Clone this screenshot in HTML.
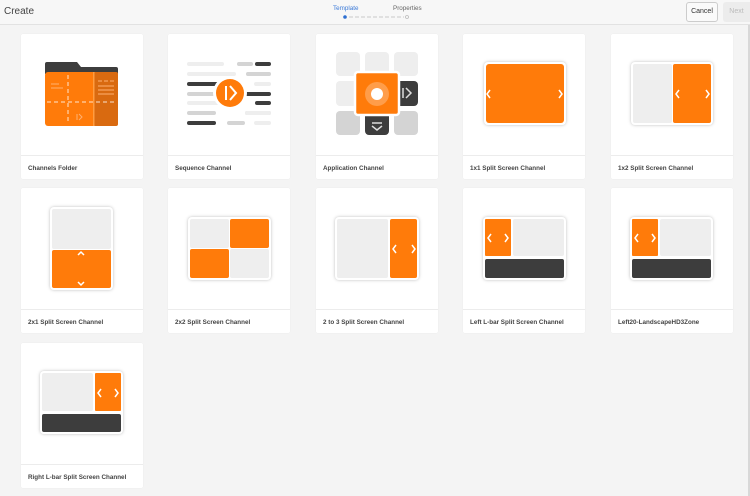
<!DOCTYPE html>
<html><head><meta charset="utf-8">
<style>
*{margin:0;padding:0;box-sizing:border-box}
body{width:750px;height:496px;background:#f4f4f4;font-family:"Liberation Sans",sans-serif;position:relative;overflow:hidden}
.hdr{position:absolute;left:0;top:0;width:750px;height:25px;background:#f7f7f7;border-bottom:1px solid #e2e2e2}
.card{position:absolute;width:122px;height:145px;background:#fff;border-radius:2px;box-shadow:0 0 1px rgba(0,0,0,.08)}
.card svg{position:absolute;left:0;top:0}
.lbl{position:absolute;left:0;top:121px;width:122px;height:24px;border-top:1px solid #ececec;font-size:6.3px;font-weight:bold;color:#444;padding:9px 0 0 7px;white-space:nowrap}
</style></head><body>
<div class="hdr">
<div style="position:absolute;left:4px;top:6px;font-size:10px;color:#444">Create</div>
<div style="position:absolute;left:333px;top:5px;font-size:6.3px;color:#3b7ad8">Template</div>
<div style="position:absolute;left:393px;top:5px;font-size:6.3px;color:#666">Properties</div>
<svg style="position:absolute;left:340px;top:13px" width="72" height="8"><circle cx="5" cy="4" r="1.8" fill="#2d6fd1"/><line x1="9" y1="4" x2="64" y2="4" stroke="#c8c8c8" stroke-width="1" stroke-dasharray="4 2"/><circle cx="67" cy="4" r="1.5" fill="none" stroke="#bbb" stroke-width=".8"/></svg>
<div style="position:absolute;left:686px;top:2px;width:32px;height:20px;border:1px solid #ccc;border-radius:3px;background:#fafafa;font-size:7px;color:#333;text-align:center;line-height:18px">Cancel</div>
<div style="position:absolute;left:723px;top:2px;width:27px;height:20px;border-radius:3px 0 0 3px;background:#ececec;font-size:7px;color:#bbb;text-align:center;line-height:20px">Next</div>
</div>
<div style="position:absolute;left:748px;top:25px;width:2px;height:471px;background:#d8d8d8"></div>

<!-- Row 1 -->
<div class="card" style="left:21px;top:34px"><svg width="122" height="121">
<path d="M24 30 q0-2 2-2 h30 l4 5 h35 q2 0 2 2 v5 h-73z" fill="#3d3d3d"/>
<rect x="24" y="38" width="73" height="54" rx="3" fill="#ff7b0a"/>
<rect x="73" y="38" width="24" height="54" rx="2" fill="#d96a10"/>
<rect x="72" y="38" width="1.5" height="54" fill="#ff9c40"/>
<line x1="47" y1="41" x2="47" y2="90" stroke="#fff" stroke-width="1" stroke-dasharray="4 3" opacity=".8"/>
<line x1="26" y1="68" x2="95" y2="68" stroke="#fff" stroke-width="1" stroke-dasharray="4 3" opacity=".8"/>
<path d="M30 50h8M30 54h12M77 47h4M83 47h4M89 47h4M77 52h16M77 56h16M77 60h16" stroke="#ffb070" stroke-width="1"/>
<path d="M56 80v6M58 80l3 3-3 3" stroke="#ffb070" stroke-width="1" fill="none"/>
</svg><div class="lbl">Channels Folder</div></div>

<div class="card" style="left:168px;top:34px"><svg width="122" height="121">
<g stroke-linecap="round" stroke-width="4">
<path d="M21 30h33M71 30h12M89 30h12" stroke="#eee"/><path d="M71 30h12" stroke="#d4d4d4"/><path d="M89 30h12" stroke="#3d3d3d"/>
<path d="M21 40h45M80 40h21" stroke="#eee"/><path d="M80 40h21" stroke="#d4d4d4"/>
<path d="M21 50h33" stroke="#3d3d3d"/><path d="M88 50h13" stroke="#eee"/>
<path d="M21 60h25" stroke="#d4d4d4"/><path d="M78 60h23" stroke="#3d3d3d"/>
<path d="M21 69h30" stroke="#eee"/><path d="M89 69h12" stroke="#3d3d3d"/>
<path d="M21 79h25M79 79h22" stroke="#d4d4d4"/><path d="M79 79h22" stroke="#eee"/>
<path d="M21 89h25" stroke="#3d3d3d"/><path d="M61 89h14" stroke="#d4d4d4"/><path d="M88 89h13" stroke="#eee"/>
</g>
<circle cx="62" cy="59" r="17" fill="#fff"/><circle cx="62" cy="59" r="14" fill="#ff7b0a"/>
<path d="M58 52v14M62 52l6 7-6 7" stroke="#fff" stroke-width="2" fill="none"/>
</svg><div class="lbl">Sequence Channel</div></div>

<div class="card" style="left:316px;top:34px"><svg width="122" height="121">
<rect x="20" y="18" width="24" height="24" rx="4" fill="#eee"/><rect x="49" y="18" width="24" height="24" rx="4" fill="#eee"/><rect x="78" y="18" width="24" height="24" rx="4" fill="#eee"/>
<rect x="20" y="47" width="24" height="25" rx="4" fill="#eee"/><rect x="78" y="47" width="24" height="25" rx="4" fill="#3d3d3d"/>
<rect x="20" y="77" width="24" height="24" rx="4" fill="#d4d4d4"/><rect x="49" y="77" width="24" height="24" rx="4" fill="#3d3d3d"/><rect x="78" y="77" width="24" height="24" rx="4" fill="#d4d4d4"/>
<path d="M87 54v10M90 54l5 5-5 5" stroke="#ddd" stroke-width="1.5" fill="none"/>
<path d="M56 89h10M56 92l5 4 5-4" stroke="#ddd" stroke-width="1.5" fill="none"/>
<rect x="39" y="38" width="44" height="43" rx="3" fill="#ff7b0a" stroke="#fff" stroke-width="2.5"/>
<circle cx="61" cy="60" r="12" fill="#ff9d4a"/><circle cx="61" cy="60" r="6" fill="#fff"/>
</svg><div class="lbl">Application Channel</div></div>

<div class="card" style="left:463px;top:34px"><svg width="122" height="121">
<rect x="21" y="28" width="82" height="63" rx="4" fill="#fff" style="filter:drop-shadow(0 0 1.5px rgba(0,0,0,.25))"/>
<rect x="23" y="30" width="78" height="59" rx="3" fill="#ff7b0a"/>
<path d="M27 56l-3 4 3 4M96 56l3 4-3 4" stroke="#fff" stroke-width="1.5" fill="none"/>
</svg><div class="lbl">1x1 Split Screen Channel</div></div>

<div class="card" style="left:611px;top:34px"><svg width="122" height="121">
<rect x="20" y="28" width="82" height="63" rx="4" fill="#fff" style="filter:drop-shadow(0 0 1.5px rgba(0,0,0,.25))"/>
<rect x="22" y="30" width="39" height="59" rx="2" fill="#eee"/>
<rect x="62" y="30" width="38" height="59" rx="2" fill="#ff7b0a"/>
<path d="M68 56l-3 4 3 4M95 56l3 4-3 4" stroke="#fff" stroke-width="1.5" fill="none"/>
</svg><div class="lbl">1x2 Split Screen Channel</div></div>

<!-- Row 2 -->
<div class="card" style="left:21px;top:188px"><svg width="122" height="121">
<rect x="29" y="19" width="63" height="83" rx="4" fill="#fff" style="filter:drop-shadow(0 0 1.5px rgba(0,0,0,.25))"/>
<rect x="31" y="21" width="59" height="40" rx="2" fill="#eee"/>
<rect x="31" y="62" width="59" height="38" rx="2" fill="#ff7b0a"/>
<path d="M57 67l3-3 3 3M57 94l3 3 3-3" stroke="#fff" stroke-width="1.5" fill="none"/>
</svg><div class="lbl">2x1 Split Screen Channel</div></div>

<div class="card" style="left:168px;top:188px"><svg width="122" height="121">
<rect x="20" y="29" width="83" height="63" rx="4" fill="#fff" style="filter:drop-shadow(0 0 1.5px rgba(0,0,0,.25))"/>
<rect x="22" y="31" width="39" height="29" rx="2" fill="#eee"/>
<rect x="62" y="31" width="39" height="29" rx="2" fill="#ff7b0a"/>
<rect x="22" y="61" width="39" height="29" rx="2" fill="#ff7b0a"/>
<rect x="62" y="61" width="39" height="29" rx="2" fill="#eee"/>
</svg><div class="lbl">2x2 Split Screen Channel</div></div>

<div class="card" style="left:316px;top:188px"><svg width="122" height="121">
<rect x="19" y="29" width="84" height="63" rx="4" fill="#fff" style="filter:drop-shadow(0 0 1.5px rgba(0,0,0,.25))"/>
<rect x="21" y="31" width="51" height="59" rx="2" fill="#eee"/>
<rect x="74" y="31" width="27" height="59" rx="2" fill="#ff7b0a"/>
<path d="M80 57l-3 4 3 4M96 57l3 4-3 4" stroke="#fff" stroke-width="1.5" fill="none"/>
</svg><div class="lbl">2 to 3 Split Screen Channel</div></div>

<div class="card" style="left:463px;top:188px"><svg width="122" height="121">
<rect x="20" y="29" width="83" height="63" rx="4" fill="#fff" style="filter:drop-shadow(0 0 1.5px rgba(0,0,0,.25))"/>
<rect x="22" y="31" width="26" height="37" rx="1" fill="#ff7b0a"/>
<rect x="50" y="31" width="51" height="37" rx="2" fill="#eee"/>
<rect x="22" y="71" width="79" height="19" rx="2" fill="#3d3d3d"/>
<path d="M28 46l-3 4 3 4M42 46l3 4-3 4" stroke="#fff" stroke-width="1.5" fill="none"/>
</svg><div class="lbl">Left L-bar Split Screen Channel</div></div>

<div class="card" style="left:611px;top:188px"><svg width="122" height="121">
<rect x="19" y="29" width="83" height="63" rx="4" fill="#fff" style="filter:drop-shadow(0 0 1.5px rgba(0,0,0,.25))"/>
<rect x="21" y="31" width="26" height="37" rx="1" fill="#ff7b0a"/>
<rect x="49" y="31" width="51" height="37" rx="2" fill="#eee"/>
<rect x="21" y="71" width="79" height="19" rx="2" fill="#3d3d3d"/>
<path d="M27 46l-3 4 3 4M41 46l3 4-3 4" stroke="#fff" stroke-width="1.5" fill="none"/>
</svg><div class="lbl">Left20-LandscapeHD3Zone</div></div>

<!-- Row 3 -->
<div class="card" style="left:21px;top:343px"><svg width="122" height="121">
<rect x="19" y="28" width="83" height="63" rx="4" fill="#fff" style="filter:drop-shadow(0 0 1.5px rgba(0,0,0,.25))"/>
<rect x="21" y="30" width="51" height="38" rx="2" fill="#eee"/>
<rect x="74" y="30" width="26" height="38" rx="1" fill="#ff7b0a"/>
<rect x="21" y="71" width="79" height="18" rx="2" fill="#3d3d3d"/>
<path d="M80 46l-3 4 3 4M94 46l3 4-3 4" stroke="#fff" stroke-width="1.5" fill="none"/>
</svg><div class="lbl">Right L-bar Split Screen Channel</div></div>
</body></html>
